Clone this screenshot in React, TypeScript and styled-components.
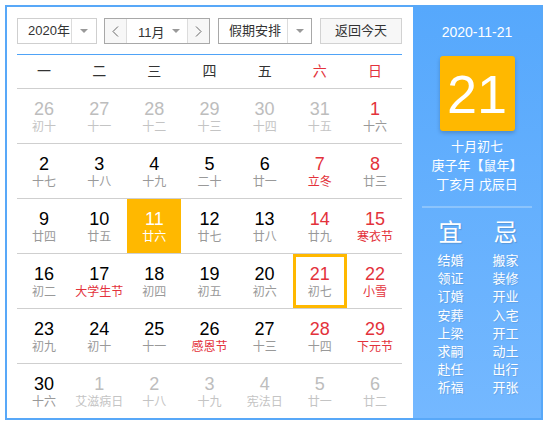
import React from "react";
import styled, { createGlobalStyle, css } from "styled-components";

const Global = createGlobalStyle`
  html, body { margin: 0; padding: 0; background: #fff; }
  body { font-family: "Liberation Sans", Arial, "Noto Sans CJK SC", sans-serif; }
  #root { padding: 5px; }
`;

const FONT = `"Liberation Sans", Arial, "Noto Sans CJK SC", sans-serif`;
const ORANGE = "#ffb800";
const RED = "#e3323b";

const Frame = styled.div`
  width: 534px;
  height: 411px;
  border: 2px solid #58a8f8;
  display: flex;
  font-family: ${FONT};
  overflow: hidden;
`;

const Main = styled.div`
  width: 385px;
  padding: 11px 11px 0 10px;
  display: flex;
  flex-direction: column;
`;

const Toolbar = styled.div`
  display: flex;
  align-items: stretch;
  height: 26px;
  gap: 0;
`;

const SelectBox = styled.div<{ $w: number; $dark?: boolean; $ml?: number }>`
  box-sizing: border-box;
  width: ${(p) => p.$w}px;
  margin-left: ${(p) => p.$ml ?? 0}px;
  height: 26px;
  border: 1px solid ${(p) => (p.$dark ? "#a8a8a8" : "#cfcfcf")};
  display: flex;
  background: #fff;
`;

const SelectText = styled.div<{ $w: number }>`
  width: ${(p) => p.$w}px;
  padding-left: 10px;
  box-sizing: border-box;
  font-size: 13px;
  line-height: 24px;
  color: #333;
  white-space: nowrap;
`;

const Caret = styled.div<{ $w: number; $border?: boolean }>`
  width: ${(p) => p.$w}px;
  border-left: ${(p) => (p.$border ? "1px solid #dcdcdc" : "none")};
  display: flex;
  align-items: center;
  justify-content: center;
  &::after {
    content: "";
    border-left: 4px solid transparent;
    border-right: 4px solid transparent;
    border-top: 4px solid #999;
  }
`;

const NavBtn = styled.div<{ $side: "l" | "r" }>`
  width: 21px;
  display: flex;
  align-items: center;
  justify-content: center;
  background: #f7f7f7;
  ${(p) =>
    p.$side === "l"
      ? css`border-right: 1px solid #dcdcdc;`
      : css`border-left: 1px solid #dcdcdc;`}
`;

const MonthPart = styled.div`
  flex: 1;
  display: flex;
  align-items: center;
  justify-content: space-between;
  padding: 0 7px 0 11px;
  font-size: 13px;
  color: #333;
  &::after {
    content: "";
    border-left: 4px solid transparent;
    border-right: 4px solid transparent;
    border-top: 4px solid #999;
  }
`;

const TodayBtn = styled.div`
  box-sizing: border-box;
  width: 82px;
  margin-left: 8px;
  height: 26px;
  border: 1px solid #d2d2d2;
  background: #f7f7f7;
  font-size: 13px;
  line-height: 24px;
  text-align: center;
  color: #333;
`;

const BlueRule = styled.div`
  margin-top: 10px;
  height: 1px;
  background: #4fa3f7;
`;

const WeekHeader = styled.div`
  display: grid;
  grid-template-columns: repeat(7, 1fr);
  column-gap: 1px;
  height: 33px;
  border-bottom: 1px solid #cfcfcf;
`;

const WeekDay = styled.div<{ $weekend?: boolean }>`
  text-align: center;
  font-size: 14px;
  line-height: 33px;
  color: ${(p) => (p.$weekend ? RED : "#333")};
`;

const Row = styled.div<{ $last?: boolean }>`
  display: grid;
  grid-template-columns: repeat(7, 1fr);
  column-gap: 1px;
  height: 54px;
  border-bottom: ${(p) => (p.$last ? "none" : "1px solid #cfcfcf")};
`;

const Cell = styled.div<{ $selected?: boolean; $today?: boolean }>`
  box-sizing: border-box;
  height: 54px;
  display: flex;
  flex-direction: column;
  align-items: center;
  padding-top: ${(p) => (p.$today ? 7 : 10)}px;
  background: ${(p) => (p.$selected ? ORANGE : "transparent")};
  border: ${(p) => (p.$today ? `3px solid ${ORANGE}` : "none")};
`;

const Num = styled.div<{ $tone: "normal" | "red" | "muted" | "white" }>`
  font-size: 18px;
  line-height: 20px;
  color: ${(p) =>
    p.$tone === "red" ? RED : p.$tone === "muted" ? "#bdbdbd" : p.$tone === "white" ? "#fff" : "#000"};
`;

const Lunar = styled.div<{ $tone: "normal" | "red" | "muted" | "white" }>`
  font-size: 12px;
  line-height: 17px;
  white-space: nowrap;
  color: ${(p) =>
    p.$tone === "red" ? RED : p.$tone === "muted" ? "#c4c4c4" : p.$tone === "white" ? "#fff" : "#999"};
`;

const Side = styled.div`
  width: 128px;
  background: linear-gradient(to bottom, #56a8fc, #74b8ff);
  display: flex;
  flex-direction: column;
  align-items: center;
  color: #fff;
`;

const SideDate = styled.div`
  margin-top: 16px;
  font-size: 14px;
  line-height: 18px;
`;

const BigDay = styled.div`
  margin-top: 15px;
  width: 75px;
  height: 75px;
  border-radius: 3px;
  background: ${ORANGE};
  box-shadow: 0 2px 4px rgba(0, 0, 0, 0.2);
  display: flex;
  align-items: center;
  justify-content: center;
  font-size: 54px;
  line-height: 1;
  color: #fff;
`;

const SideInfo = styled.div`
  margin-top: 6px;
  font-size: 13px;
  line-height: 19px;
  text-align: center;
  white-space: nowrap;
`;

const Divider = styled.div`
  margin-top: 12px;
  width: 110px;
  height: 2px;
  background: #8cc4fc;
`;

const Advice = styled.div`
  margin-top: 11px;
  margin-left: 2px;
  display: grid;
  grid-template-columns: 55px 55px;
  text-align: center;
`;

const AdviceHead = styled.div`
  font-size: 24px;
  line-height: 28px;
  margin-bottom: 5px;
  text-shadow: 1px 1px 1px rgba(0, 0, 0, 0.15);
`;

const AdviceItem = styled.div`
  font-size: 13px;
  line-height: 18.2px;
  text-shadow: 1px 1px 1px rgba(0, 0, 0, 0.1);
`;

const Chevron = ({ dir }: { dir: "l" | "r" }) => (
  <svg width="7" height="11" viewBox="0 0 7 11">
    <polyline
      points={dir === "l" ? "6,0.5 1,5.5 6,10.5" : "1,0.5 6,5.5 1,10.5"}
      fill="none"
      stroke="#666"
      strokeWidth="1"
    />
  </svg>
);

type Tone = "normal" | "red" | "muted" | "white";
type Day = { n: number; l: string; nt?: Tone; lt?: Tone; sel?: boolean; today?: boolean };

const M: Tone = "muted";
const R: Tone = "red";

const rows: Day[][] = [
  [
    { n: 26, l: "初十", nt: M, lt: M },
    { n: 27, l: "十一", nt: M, lt: M },
    { n: 28, l: "十二", nt: M, lt: M },
    { n: 29, l: "十三", nt: M, lt: M },
    { n: 30, l: "十四", nt: M, lt: M },
    { n: 31, l: "十五", nt: M, lt: M },
    { n: 1, l: "十六", nt: R },
  ],
  [
    { n: 2, l: "十七" },
    { n: 3, l: "十八" },
    { n: 4, l: "十九" },
    { n: 5, l: "二十" },
    { n: 6, l: "廿一" },
    { n: 7, l: "立冬", nt: R, lt: R },
    { n: 8, l: "廿三", nt: R },
  ],
  [
    { n: 9, l: "廿四" },
    { n: 10, l: "廿五" },
    { n: 11, l: "廿六", nt: "white", lt: "white", sel: true },
    { n: 12, l: "廿七" },
    { n: 13, l: "廿八" },
    { n: 14, l: "廿九", nt: R },
    { n: 15, l: "寒衣节", nt: R, lt: R },
  ],
  [
    { n: 16, l: "初二" },
    { n: 17, l: "大学生节", lt: R },
    { n: 18, l: "初四" },
    { n: 19, l: "初五" },
    { n: 20, l: "初六" },
    { n: 21, l: "初七", nt: R, today: true },
    { n: 22, l: "小雪", nt: R, lt: R },
  ],
  [
    { n: 23, l: "初九" },
    { n: 24, l: "初十" },
    { n: 25, l: "十一" },
    { n: 26, l: "感恩节", lt: R },
    { n: 27, l: "十三" },
    { n: 28, l: "十四", nt: R },
    { n: 29, l: "下元节", nt: R, lt: R },
  ],
  [
    { n: 30, l: "十六" },
    { n: 1, l: "艾滋病日", nt: M, lt: M },
    { n: 2, l: "十八", nt: M, lt: M },
    { n: 3, l: "十九", nt: M, lt: M },
    { n: 4, l: "宪法日", nt: M, lt: M },
    { n: 5, l: "廿一", nt: M, lt: M },
    { n: 6, l: "廿二", nt: M, lt: M },
  ],
];

const weekdays = ["一", "二", "三", "四", "五", "六", "日"];
const yi = ["结婚", "领证", "订婚", "安葬", "上梁", "求嗣", "赴任", "祈福"];
const ji = ["搬家", "装修", "开业", "入宅", "开工", "动土", "出行", "开张"];

export default function App() {
  return (
    <>
      <Global />
      <Frame>
        <Main>
          <Toolbar>
            <SelectBox $w={80}>
              <SelectText $w={54}>2020年</SelectText>
              <Caret $w={24} $border />
            </SelectBox>
            <SelectBox $w={106} $dark $ml={7}>
              <NavBtn $side="l">
                <Chevron dir="l" />
              </NavBtn>
              <MonthPart>11月</MonthPart>
              <NavBtn $side="r">
                <Chevron dir="r" />
              </NavBtn>
            </SelectBox>
            <SelectBox $w={94} $dark $ml={8}>
              <SelectText $w={69}>假期安排</SelectText>
              <Caret $w={23} $border />
            </SelectBox>
            <TodayBtn>返回今天</TodayBtn>
          </Toolbar>
          <BlueRule />
          <WeekHeader>
            {weekdays.map((w, i) => (
              <WeekDay key={w} $weekend={i >= 5}>
                {w}
              </WeekDay>
            ))}
          </WeekHeader>
          {rows.map((r, ri) => (
            <Row key={ri} $last={ri === rows.length - 1}>
              {r.map((d, di) => (
                <Cell key={di} $selected={d.sel} $today={d.today}>
                  <Num $tone={d.nt ?? "normal"}>{d.n}</Num>
                  <Lunar $tone={d.lt ?? "normal"}>{d.l}</Lunar>
                </Cell>
              ))}
            </Row>
          ))}
        </Main>
        <Side>
          <SideDate>2020-11-21</SideDate>
          <BigDay>21</BigDay>
          <SideInfo>
            十月初七
            <br />
            庚子年【鼠年】
            <br />
            丁亥月 戊辰日
          </SideInfo>
          <Divider />
          <Advice>
            <AdviceHead>宜</AdviceHead>
            <AdviceHead>忌</AdviceHead>
            {yi.map((y, i) => (
              <React.Fragment key={y}>
                <AdviceItem>{y}</AdviceItem>
                <AdviceItem>{ji[i]}</AdviceItem>
              </React.Fragment>
            ))}
          </Advice>
        </Side>
      </Frame>
    </>
  );
}
